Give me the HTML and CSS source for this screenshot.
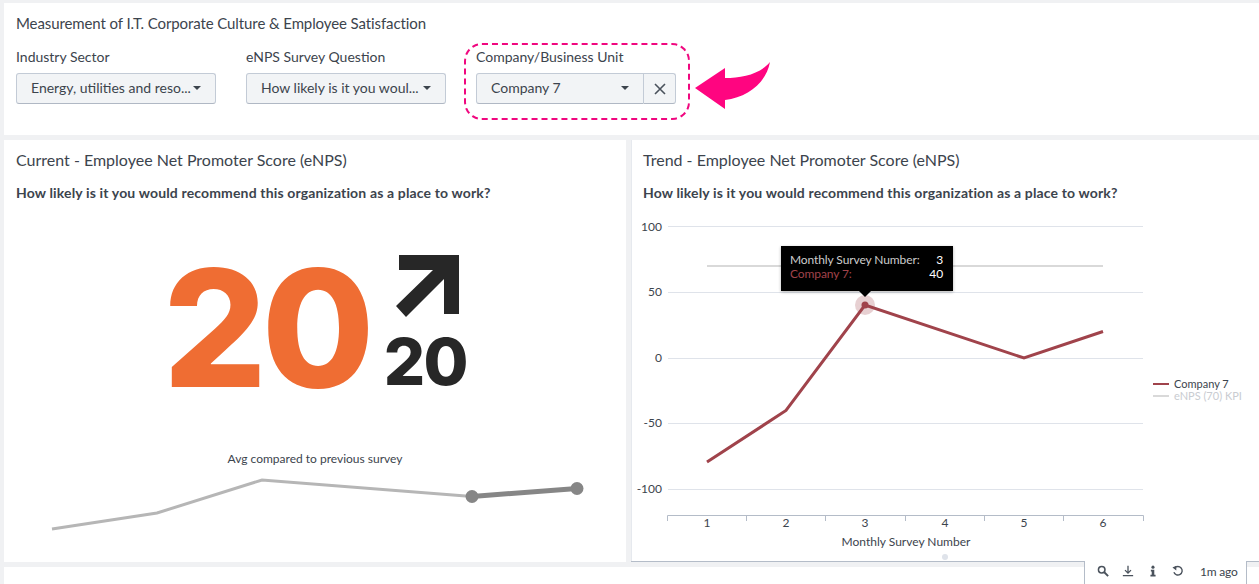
FILE: index.html
```html
<!DOCTYPE html>
<html lang="en">
<head>
    <meta charset="UTF-8">
    <meta name="viewport" content="width=device-width, initial-scale=1.0">
    <title>Employee Satisfaction</title>
    <link rel="stylesheet" href="styles.css">
</head>
<body>
    <div class="dashboard">
        <section class="panel filters">
            <h2 class="page-title">Measurement of I.T. Corporate Culture &amp; Employee Satisfaction</h2>
            <div class="filter-row">
                <div class="filter">
                    <label>Industry Sector</label>
                    <div class="select"><span>Energy, utilities and reso...</span><i class="caret"></i></div>
                </div>
                <div class="filter">
                    <label>eNPS Survey Question</label>
                    <div class="select"><span>How likely is it you woul...</span><i class="caret"></i></div>
                </div>
                <div class="filter filter-company">
                    <span class="dashed"></span>
                    <label>Company/Business Unit</label>
                    <div class="select-group">
                        <div class="select"><span>Company 7</span><i class="caret"></i></div>
                        <div class="clear">
                            <svg width="12" height="12" viewBox="0 0 12 12"><path d="M1 1 L11 11 M11 1 L1 11" stroke="#4a525c" stroke-width="1.6" fill="none"/></svg>
                        </div>
                    </div>
                </div>
                <svg class="pointer" width="78" height="50" viewBox="0 0 78 50">
                    <path d="M1 27 L31 7 L31 17 C48 17 66 13 76 1 C72 22 54 36 31 39 L31 48 Z" fill="#ff0580"/>
                </svg>
            </div>
        </section>

        <div class="row">
            <section class="panel current">
                <h2>Current - Employee Net Promoter Score (eNPS)</h2>
                <p class="question">How likely is it you would recommend this organization as a place to work?</p>
                <div class="score">
                    <span class="score-value">20</span>
                    <div class="score-delta">
                        <svg width="66" height="66" viewBox="0 0 66 66"><path d="M3 1 L63 1 L63 60 L48 60 L48 25 L10 63 L0 52 L37 16 L3 16 Z" fill="#272727"/></svg>
                        <span>20</span>
                    </div>
                </div>
                <p class="spark-label">Avg compared to previous survey</p>
                <svg class="spark" width="622" height="100" viewBox="4 466 622 100">
                    <polyline points="52,529 157,513 262,480 472,496.5" fill="none" stroke="#b6b6b6" stroke-width="3"/>
                    <polyline points="472,496.5 577,488.5" fill="none" stroke="#868686" stroke-width="5"/>
                    <circle cx="472" cy="496.5" r="6.5" fill="#868686"/>
                    <circle cx="577" cy="488.5" r="6.5" fill="#868686"/>
                </svg>
            </section>

            <section class="panel trend">
                <h2>Trend - Employee Net Promoter Score (eNPS)</h2>
                <p class="question">How likely is it you would recommend this organization as a place to work?</p>
                <div class="chart">
                    <svg width="628" height="352" viewBox="631 210 628 352">
                        <g stroke="#dfe3ea" stroke-width="1">
                            <line x1="668" x2="1143" y1="226.5" y2="226.5"/>
                            <line x1="668" x2="1143" y1="292.5" y2="292.5"/>
                            <line x1="668" x2="1143" y1="358.5" y2="358.5"/>
                            <line x1="668" x2="1143" y1="423.5" y2="423.5"/>
                            <line x1="668" x2="1143" y1="489.5" y2="489.5"/>
                        </g>
                        <g class="tick-label" text-anchor="end">
                            <text x="662" y="231">100</text>
                            <text x="662" y="296">50</text>
                            <text x="662" y="362">0</text>
                            <text x="662" y="427">-50</text>
                            <text x="662" y="493">-100</text>
                        </g>
                        <path d="M667.5 521 V515.5 H1143.5 V521 M746.5 515.5 V521 M825.5 515.5 V521 M905.5 515.5 V521 M984.5 515.5 V521 M1063.5 515.5 V521" fill="none" stroke="#b4bcc8"/>
                        <g class="tick-label" text-anchor="middle">
                            <text x="707" y="527">1</text>
                            <text x="786" y="527">2</text>
                            <text x="865" y="527">3</text>
                            <text x="945" y="527">4</text>
                            <text x="1024" y="527">5</text>
                            <text x="1103" y="527">6</text>
                            <text x="906" y="546">Monthly Survey Number</text>
                        </g>
                        <line x1="707" x2="1103" y1="266" y2="266" stroke="#d9d9d9" stroke-width="2"/>
                        <polyline points="707,462 786,410.5 865,305 1024,358 1103,331.5" fill="none" stroke="#a0434b" stroke-width="3"/>
                        <circle cx="865" cy="305" r="10" fill="#a0434b" fill-opacity="0.25"/>
                        <circle cx="865" cy="305" r="3.5" fill="#a0434b"/>
                        <line x1="1153" x2="1169" y1="384" y2="384" stroke="#a0434b" stroke-width="2"/>
                        <line x1="1153" x2="1169" y1="396" y2="396" stroke="#d9d9d9" stroke-width="2"/>
                        <text class="legend-on" x="1174" y="388">Company 7</text>
                        <text class="legend-off" x="1174" y="400">eNPS (70) KPI</text>
                    </svg>
                    <div class="tooltip">
                        <div class="tip-row"><span>Monthly Survey Number:</span><b>3</b></div>
                        <div class="tip-row tip-series"><span>Company 7:</span><b>40</b></div>
                    </div>
                </div>
                <i class="resize-dot"></i>
            </section>
        </div>

        <section class="panel bottom"></section>
    </div>

    <div class="toolbar">
        <svg width="12" height="12" viewBox="0 0 14 14"><circle cx="5.5" cy="5.5" r="3.8" fill="none" stroke="#4a525c" stroke-width="1.8"/><path d="M8.5 8.5 L13 13" stroke="#4a525c" stroke-width="2.2"/></svg>
        <svg width="12" height="12" viewBox="0 0 14 14"><path d="M7 1 V9 M3.5 6 L7 9.5 L10.5 6 M1 12.5 H13" fill="none" stroke="#4a525c" stroke-width="1.5"/></svg>
        <svg width="12" height="12" viewBox="0 0 14 14"><circle cx="7" cy="2.5" r="1.8" fill="#4a525c"/><path d="M4.5 5.5 H8.5 V11.5 H10 V13.5 H4 V11.5 H5.5 V7.5 H4.5 Z" fill="#4a525c"/></svg>
        <svg width="12" height="12" viewBox="0 0 14 14"><path d="M3 3.5 A5 5 0 1 1 2.2 8.5" fill="none" stroke="#4a525c" stroke-width="1.6"/><path d="M0.5 3 L5 1 L5 6.5 Z" fill="#4a525c"/></svg>
        <span>1m ago</span>
    </div>
</body>
</html>
```

FILE: styles.css
```css
html, body {
    height: 100%;
}
body {
    font-family: Lato, "Open Sans", sans-serif;
    background-color: #f0f1f3;
    color: #3c444d;
    margin: 0;
    overflow: hidden;
    position: relative;
}
.dashboard {
    display: flex;
    flex-direction: column;
    gap: 5px;
    padding: 3px 0 0 4px;
}
.panel {
    background: #fff;
    position: relative;
}
h2 {
    font-size: 16px;
    font-weight: 400;
    line-height: 20px;
    margin: 0;
}
.page-title {
    font-size: 15px;
    letter-spacing: -0.1px;
}
.filters {
    height: 132px;
    padding: 10px 12px 0;
    box-sizing: border-box;
}
.filter-row {
    display: flex;
    gap: 30px;
    margin-top: 15px;
}
.filter {
    width: 200px;
    position: relative;
}
.filter label {
    display: block;
    font-size: 14px;
    line-height: 18px;
    margin-bottom: 7px;
}
.select {
    display: flex;
    align-items: center;
    justify-content: space-between;
    height: 31px;
    box-sizing: border-box;
    padding: 0 14px 2px;
    background: #f2f4f6;
    border: 1px solid #c3cbd6;
    border-bottom-color: #b0b8c4;
    border-radius: 3px;
    font-size: 14px;
}
.caret {
    width: 0;
    height: 0;
    border-left: 4px solid transparent;
    border-right: 4px solid transparent;
    border-top: 4px solid #3c444d;
}
.select-group {
    display: flex;
}
.select-group .select {
    width: 169px;
    border-radius: 3px 0 0 3px;
}
.clear {
    width: 32px;
    height: 31px;
    box-sizing: border-box;
    display: flex;
    align-items: center;
    justify-content: center;
    background: #f2f4f6;
    border: 1px solid #c3cbd6;
    border-left: 0;
    border-bottom-color: #b0b8c4;
    border-radius: 0 3px 3px 0;
}
.dashed {
    position: absolute;
    left: -12px;
    top: -5px;
    width: 222px;
    height: 73px;
    border: 2px dashed #f0077f;
    border-radius: 18px;
}
.pointer {
    position: absolute;
    left: 690px;
    top: 58px;
}
.row {
    display: flex;
    gap: 5px;
}
.current, .trend {
    height: 422px;
    box-sizing: border-box;
    padding-top: 10px;
}
.current {
    width: 622px;
}
.trend {
    width: 628px;
    box-shadow: inset 1px 0 0 #e6e9ee;
    border-bottom: 1px solid #b4bcc8;
}
.current h2, .current .question, .trend h2, .trend .question {
    margin-left: 12px;
}
.question {
    font-size: 14px;
    font-weight: 700;
    line-height: 18px;
    letter-spacing: 0.15px;
    margin: 14px 0 0;
}
.score {
    display: flex;
    justify-content: center;
    align-items: flex-end;
    height: 201px;
}
.score-value {
    font-family: Inter, sans-serif;
    font-size: 163px;
    font-weight: 800;
    line-height: 150px;
    color: #ef6d33;
    letter-spacing: -5px;
}
.score-delta {
    display: flex;
    flex-direction: column;
    margin-left: 14px;
    margin-bottom: 11px;
    align-items: center;
}
.score-delta svg {
    margin: 0 0 12px 8px;
}
.score-delta span {
    font-family: Inter, sans-serif;
    font-size: 65px;
    font-weight: 800;
    line-height: 60px;
    color: #272727;
    letter-spacing: -1.5px;
}
.spark-label {
    text-align: center;
    font-size: 12px;
    margin: 48px 0 0;
    line-height: 16px;
}
.spark {
    position: absolute;
    left: 0;
    top: 326px;
}
.chart {
    position: relative;
    margin-top: 8px;
}
.chart svg {
    display: block;
}
.tick-label text, .legend-on {
    font-size: 12px;
    fill: #3c444d;
}
.legend-on, .legend-off {
    font-size: 11px;
}
.legend-off {
    fill: #c9ccd1;
}
.tooltip {
    position: absolute;
    left: 150px;
    top: 36px;
    width: 172px;
    height: 45px;
    box-sizing: border-box;
    padding: 7px 10px 0 9px;
    background: #000;
    color: #ccc;
    font-size: 12px;
    letter-spacing: -0.1px;
    line-height: 14px;
    box-shadow: 0 1px 3px rgba(0, 0, 0, 0.3);
}
.tooltip::after {
    content: "";
    position: absolute;
    left: 78px;
    top: 45px;
    border-left: 6px solid transparent;
    border-right: 6px solid transparent;
    border-top: 6px solid #000;
}
.tip-row {
    display: flex;
    justify-content: space-between;
}
.tip-row b {
    color: #fff;
    font-weight: 400;
}
.tip-series span {
    color: #a0434b;
}
.resize-dot {
    position: absolute;
    left: 311px;
    bottom: 1px;
    width: 6px;
    height: 6px;
    border-radius: 50%;
    background: #dfe3ea;
}
.bottom {
    height: 40px;
}
.toolbar {
    position: absolute;
    left: 1084px;
    top: 561px;
    width: 163px;
    height: 23px;
    box-sizing: border-box;
    background: #fff;
    border: 1px solid #b4bcc8;
    border-top: 0;
    border-bottom: 0;
    display: flex;
    align-items: center;
    gap: 13px;
    padding: 0 0 3px 12px;
    font-size: 12px;
}
.toolbar span {
    margin-left: 3px;
    letter-spacing: -0.2px;
}
```
